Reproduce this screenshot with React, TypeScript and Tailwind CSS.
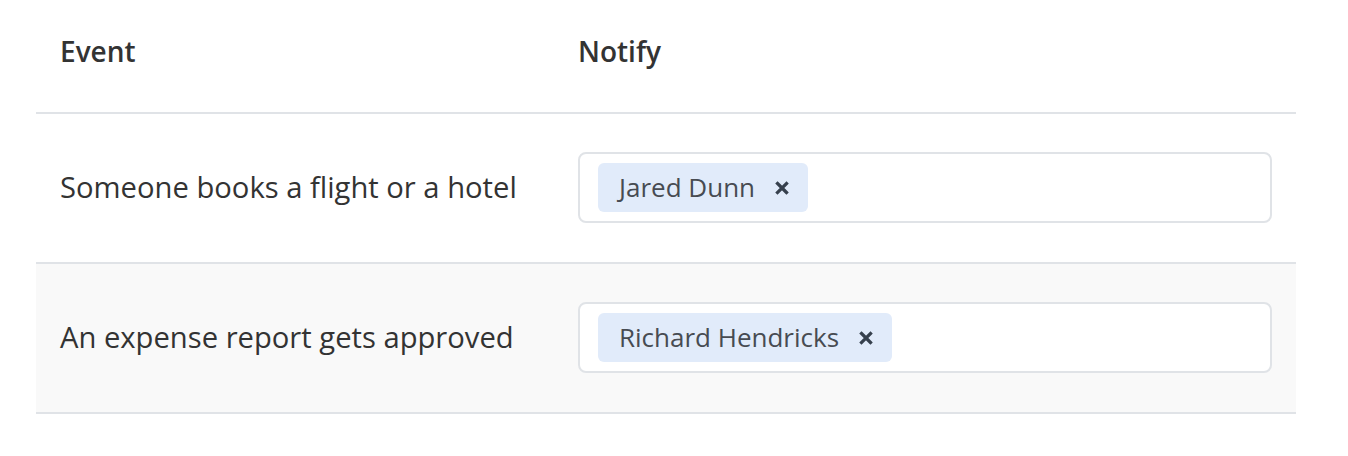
const ROWS = [
  { event: 'Someone books a flight or a hotel', people: ['Jared Dunn'] },
  { event: 'An expense report gets approved', people: ['Richard Hendricks'] },
]

function Chip({ name }: { name: string }) {
  return (
    <span className="flex h-[49px] items-center gap-5 rounded-md bg-[#e1ebfa] pl-[21px] pr-[19px] text-[26px] text-[#474b52]">
      {name}
      <svg viewBox="0 0 14 14" width="14" height="14" className="text-[#36404d]" aria-hidden="true">
        <path d="M2.5 2.5l9 9M11.5 2.5l-9 9" stroke="currentColor" strokeWidth="3.2" strokeLinecap="square" />
      </svg>
    </span>
  )
}

export default function App() {
  return (
    <div className="min-h-[456px] bg-white px-[36px] pr-[52px] font-['Open_Sans',sans-serif] text-[#333]">
      <div className="flex h-[114px] border-b-2 border-[#e0e3e7] pt-[30px] text-[28px] font-semibold">
        <div className="w-[518px] pl-6">Event</div>
        <div className="pl-6">Notify</div>
      </div>
      {ROWS.map((row, i) => (
        <div
          key={row.event}
          className={`flex h-[150px] items-center border-b-2 border-[#e0e3e7] ${i % 2 === 1 ? 'bg-[#f9f9f9]' : 'bg-white'}`}
        >
          <div className="w-[518px] pl-6 text-[29.2px]">{row.event}</div>
          <div className="flex-1 pl-6 pr-6">
            <div className="-mt-px flex h-[71px] items-center gap-2 rounded-lg border-2 border-[#e0e3e7] bg-white px-[18px]">
              {row.people.map((p) => (
                <Chip key={p} name={p} />
              ))}
            </div>
          </div>
        </div>
      ))}
    </div>
  )
}
